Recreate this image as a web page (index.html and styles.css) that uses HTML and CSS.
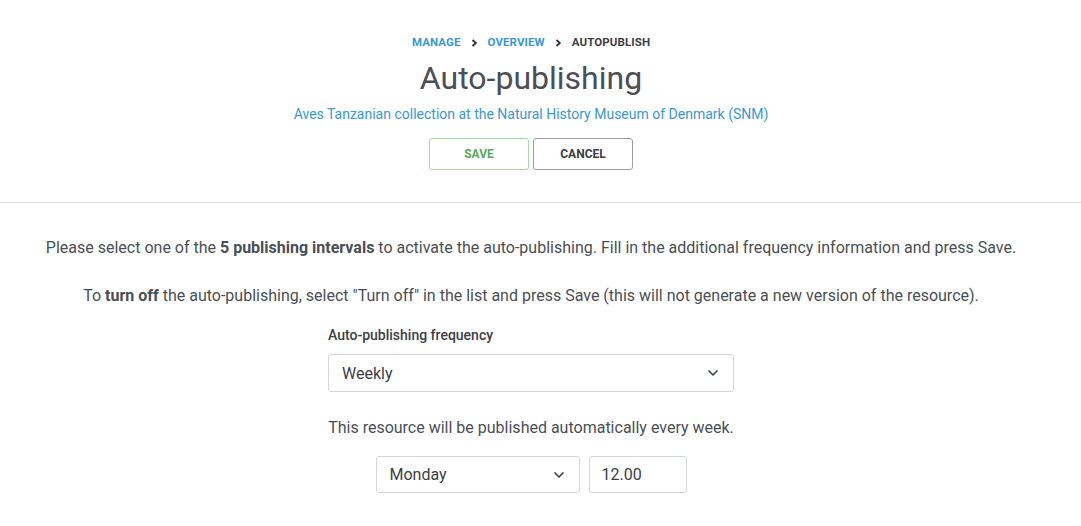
FILE: index.html
```html
<!DOCTYPE html>
<html lang="en">
<head>
<meta charset="utf-8">
<title>Auto-publishing</title>
<link rel="stylesheet" href="styles.css">
</head>
<body>
<header class="page-header">
  <div class="inner">
    <nav class="crumbs">
      <a href="#" class="crumb-link">Manage</a>
      <span class="sep"><svg width="7" height="8" viewBox="0 0 7 8"><path d="M1.5 1 L4.8 4 L1.5 7" fill="none" stroke="#2b2f33" stroke-width="1.8"/></svg></span>
      <a href="#" class="crumb-link">Overview</a>
      <span class="sep"><svg width="7" height="8" viewBox="0 0 7 8"><path d="M1.5 1 L4.8 4 L1.5 7" fill="none" stroke="#2b2f33" stroke-width="1.8"/></svg></span>
      <span class="crumb-current">Autopublish</span>
    </nav>
    <h1 class="title">Auto-publishing</h1>
    <a href="#" class="subtitle">Aves Tanzanian collection at the Natural History Museum of Denmark (SNM)</a>
    <div class="actions">
      <button class="btn btn-save">Save</button>
      <button class="btn btn-cancel">Cancel</button>
    </div>
  </div>
</header>
<main class="content">
  <div class="inner">
    <p class="intro">Please select one of the <strong>5 publishing intervals</strong> to activate the auto-publishing. Fill in the additional frequency information and press Save.</p>
    <p class="intro second">To <strong>turn off</strong> the auto-publishing, select "Turn off" in the list and press Save (this will not generate a new version of the resource).</p>
    <div class="form">
      <label class="label">Auto-publishing frequency</label>
      <div class="select select-wide">
        <span>Weekly</span>
        <svg width="12" height="8" viewBox="0 0 12 8"><path d="M1.5 1.5 L6 6 L10.5 1.5" fill="none" stroke="#343a40" stroke-width="1.5"/></svg>
      </div>
      <p class="note">This resource will be published automatically every week.</p>
      <div class="row">
        <div class="select select-day">
          <span>Monday</span>
          <svg width="12" height="8" viewBox="0 0 12 8"><path d="M1.5 1.5 L6 6 L10.5 1.5" fill="none" stroke="#343a40" stroke-width="1.5"/></svg>
        </div>
        <div class="input-time">12.00</div>
      </div>
    </div>
  </div>
</main>
</body>
</html>
```
FILE: styles.css
```css
html, body {
  margin: 0;
  padding: 0;
  background: #fff;
}
body {
  font-family: Roboto, "Liberation Sans", Arial, sans-serif;
  color: #4a4f55;
}
.inner {
  margin-right: 19px;
  display: flex;
  flex-direction: column;
  align-items: center;
}
.page-header {
  border-bottom: 1px solid #dfe1e4;
  padding-top: 36px;
  padding-bottom: 32px;
}
.crumbs {
  display: flex;
  align-items: center;
  gap: 10px;
  font-size: 11.5px;
  font-weight: 700;
  text-transform: uppercase;
  line-height: 13px;
  letter-spacing: 0.1px;
}
.crumb-link {
  color: #3a98cf;
  text-decoration: none;
}
.crumb-current {
  color: #3b4046;
}
.sep {
  display: flex;
  align-items: center;
}
.title {
  margin: 9px 0 0;
  font-size: 32px;
  font-weight: 400;
  line-height: 40px;
  color: #4a4f57;
}
.subtitle {
  margin-top: 8px;
  font-size: 14px;
  line-height: 17px;
  color: #3a98cf;
  text-decoration: none;
}
.actions {
  display: flex;
  gap: 4px;
  margin-top: 15px;
}
.btn {
  width: 100px;
  height: 32px;
  border-radius: 3px;
  background: #fff;
  font-family: inherit;
  font-size: 12px;
  font-weight: 700;
  text-transform: uppercase;
  padding: 0;
  cursor: pointer;
}
.btn-save {
  color: #5aa85b;
  border: 1px solid #a9d6a9;
}
.btn-cancel {
  color: #3b4046;
  border: 1px solid #9a9ea3;
}
.content .inner {
  padding-top: 34px;
}
.intro {
  margin: 0;
  font-size: 16px;
  line-height: 22px;
  color: #4a4f55;
  text-align: center;
}
.intro.second {
  margin-top: 26px;
}
.intro strong {
  font-weight: 700;
}
.form {
  width: 406px;
  margin-top: 20px;
  display: flex;
  flex-direction: column;
}
.label {
  font-size: 14px;
  font-weight: 500;
  line-height: 17px;
  color: #3b4046;
}
.select {
  box-sizing: border-box;
  border: 1px solid #d3d6da;
  border-radius: 3px;
  display: flex;
  align-items: center;
  justify-content: space-between;
  font-size: 16px;
  color: #3b4046;
}
.select-wide {
  margin-top: 10px;
  height: 38px;
  padding: 0 14px 0 13px;
}
.note {
  margin: 25px 0 0;
  font-size: 16px;
  line-height: 22px;
  text-align: center;
  color: #4a4f55;
}
.row {
  display: flex;
  justify-content: center;
  gap: 9px;
  margin-top: 17px;
}
.select-day {
  width: 204px;
  height: 37px;
  padding: 0 14px 0 13px;
}
.input-time {
  box-sizing: border-box;
  width: 98px;
  height: 37px;
  border: 1px solid #d3d6da;
  border-radius: 3px;
  display: flex;
  align-items: center;
  padding-left: 12px;
  font-size: 16px;
  color: #3b4046;
}
```
